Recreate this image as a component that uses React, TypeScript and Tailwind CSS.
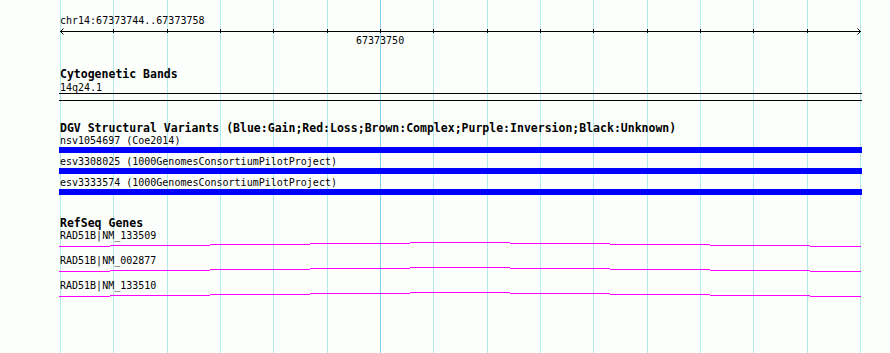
import React from 'react';

// 15 bases across 800px, grid at every base
const gridXs = [60, 113, 167, 220, 273, 327, 380, 433, 487, 540, 593, 647, 700, 753, 807, 860];

const dgvRows = [
  'nsv1054697 (Coe2014)',
  'esv3308025 (1000GenomesConsortiumPilotProject)',
  'esv3333574 (1000GenomesConsortiumPilotProject)',
];

const genes = ['RAD51B|NM_133509', 'RAD51B|NM_002877', 'RAD51B|NM_133510'];

// gene line steps: [x0, x1, y] in column coords (column starts at x=59)
const geneSegs: [number, number, number][] = [
  [0, 51, 5],
  [51, 151, 4],
  [151, 251, 3],
  [251, 351, 2],
  [351, 451, 1],
  [451, 551, 2],
  [551, 651, 3],
  [651, 751, 4],
  [751, 802, 5],
];

function Grid() {
  return (
    <svg className="absolute inset-0" width={890} height={353}>
      {gridXs.map((x) => (
        <rect key={x} x={x} y={0} width={1} height={353} fill={x === 380 ? '#86cdea' : '#b0e8ee'} />
      ))}
    </svg>
  );
}

function Ruler() {
  return (
    <svg width={803} height={7} className="block overflow-visible">
      <rect x={1} y={3} width={801} height={1} fill="#000" />
      {gridXs.slice(1, -1).map((x) => (
        <rect key={x} x={x - 59} y={1} width={1} height={4} fill="#000" />
      ))}
      <path d="M4.5 0.5 L1.5 3.5 L4.5 6.5" stroke="#000" strokeWidth={1} fill="none" />
      <path d="M798.5 0.5 L801.5 3.5 L798.5 6.5" stroke="#000" strokeWidth={1} fill="none" />
    </svg>
  );
}

function GeneLine() {
  return (
    <svg width={803} height={14} className="block">
      {geneSegs.map(([x0, x1, y]) => (
        <rect key={x0} x={x0} y={y} width={x1 - x0} height={1} fill="#ff00ff" />
      ))}
    </svg>
  );
}

export default function App() {
  return (
    <div className="relative w-[890px] h-[353px] overflow-hidden bg-[#fdfffd] text-black font-['DejaVu_Sans_Mono',monospace]">
      <Grid />
      <div className="relative ml-[59px] w-[803px] flex flex-col">
        {/* ruler */}
        <div className="mt-[15px] h-[13px] pl-[1px] text-[10px] leading-[12px]">chr14:67373744..67373758</div>
        <Ruler />
        <div className="h-[12px] text-[10px] leading-[11px] pl-[297px]">67373750</div>

        {/* cytobands */}
        <div className="mt-[21px] h-[13px] pl-[1px] text-[11.5px] leading-[13px] font-bold">Cytogenetic Bands</div>
        <div className="mt-[1px] h-[11px] pl-[1px] text-[10px] leading-[11px]">14q24.1</div>
        <div className="h-[1px] bg-black" />
        <div className="mt-[6px] h-[1px] bg-black" />

        {/* DGV */}
        <div className="mt-[21px] h-[13px] pl-[1px] text-[11.5px] leading-[13px] font-bold whitespace-nowrap">
          DGV Structural Variants (Blue:Gain;Red:Loss;Brown:Complex;Purple:Inversion;Black:Unknown)
        </div>
        {dgvRows.map((r, i) => (
          <div key={r} className={i === 0 ? '' : 'mt-[3px]'}>
            <div className="h-[11px] pl-[1px] text-[10px] leading-[11px] whitespace-nowrap">{r}</div>
            <div className="mt-[1px] h-[6px] bg-[#0000ff]" />
          </div>
        ))}

        {/* RefSeq */}
        <div className="mt-[22px] h-[13px] pl-[1px] text-[11.5px] leading-[13px] font-bold">RefSeq Genes</div>
        {genes.map((g) => (
          <div key={g}>
            <div className="h-[11px] pl-[1px] text-[10px] leading-[11px]">{g}</div>
            <GeneLine />
          </div>
        ))}
      </div>
    </div>
  );
}
